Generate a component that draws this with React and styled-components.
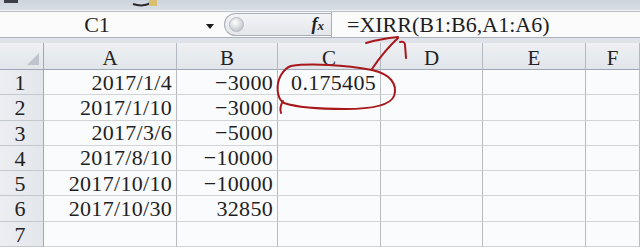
import React from 'react';
import styled, { createGlobalStyle } from 'styled-components';

const GlobalStyle = createGlobalStyle`
  body {
    margin: 0;
    background: #d6dce4;
    font-family: "Liberation Serif", serif;
  }
`;

const Page = styled.div`
  position: relative;
  width: 640px;
  height: 247px;
  overflow: hidden;
  display: flex;
  flex-direction: column;
  background: #dfe3e9;
`;

const TopStrip = styled.div`
  height: 10px;
  flex: none;
  background: linear-gradient(#cdd4dd, #d9dee5);
  border-bottom: 1px solid #f1f3f6;
  display: flex;
  align-items: flex-start;
  gap: 105px;
  padding-left: 4px;
`;

const FormulaBar = styled.div`
  height: 25px;
  flex: none;
  display: flex;
  background: #fbfbfc;
  border-top: 1px solid #b7bec8;
  border-bottom: 1px solid #aab2bd;
`;

const NameBox = styled.div`
  width: 224px;
  position: relative;
  display: flex;
  align-items: center;
  justify-content: center;
  padding-right: 30px;
  box-sizing: border-box;
  font-size: 22px;
  color: #222;
`;

const DropArrow = styled.span`
  position: absolute;
  right: 10px;
  top: 12px;
  width: 0;
  height: 0;
  border-left: 4px solid transparent;
  border-right: 4px solid transparent;
  border-top: 5px solid #1a1a1a;
`;

const Pill = styled.div`
  width: 107px;
  margin: 1px 0;
  box-sizing: border-box;
  border: 1px solid #a9afb8;
  border-right: none;
  border-radius: 12px 0 0 12px;
  background: linear-gradient(#f3f4f6, #e3e6ea);
  display: flex;
  align-items: center;
  justify-content: space-between;
  padding: 0 7px 0 4px;
`;

const Knob = styled.span`
  width: 13px;
  height: 13px;
  border-radius: 50%;
  background: radial-gradient(circle at 40% 35%, #ffffff, #c3c7cd 75%);
  border: 1px solid #b6bbc2;
`;

const Fx = styled.span`
  font-weight: bold;
  font-style: italic;
  font-size: 18px;
  color: #1e1e1e;
  span {
    font-size: 13px;
  }
`;

const FormulaInput = styled.div`
  flex: 1;
  border-left: 1px solid #a9afb8;
  display: flex;
  align-items: center;
  padding-left: 15px;
  font-size: 22px;
  color: #1d1d1d;
`;

const Gap = styled.div`
  height: 5px;
  flex: none;
  background: #dfe3e9;
`;

const Sheet = styled.div`
  display: grid;
  grid-template-columns: 44px 133px 101px 103px 102px 103px 1fr;
  grid-template-rows: 27px;
  grid-auto-rows: 25.28px;
`;

const Cell = styled.div`
  box-sizing: border-box;
  border-right: 1px solid #b8bbc0;
  border-bottom: 1px solid #d2d4d8;
  background: #fafbfc;
  display: flex;
  align-items: center;
  justify-content: flex-end;
  padding: 1px 4px 0 0;
  font-size: 22px;
  line-height: 18px;
  letter-spacing: 0.3px;
  font-variant-numeric: tabular-nums;
  color: #1f1f1f;
  white-space: nowrap;
`;

const ColHead = styled.div`
  box-sizing: border-box;
  border-right: 1px solid #b3b9c2;
  border-bottom: 1px solid #9ea7b3;
  background: linear-gradient(#eef0f3, #e1e5ea);
  display: flex;
  align-items: center;
  justify-content: center;
  padding-top: 5px;
  font-size: 21px;
  color: #222;
  position: relative;
`;

const Corner = styled(ColHead)`
  border-right-color: #9ea7b3;
  &::after {
    content: '';
    position: absolute;
    right: 4px;
    bottom: 4px;
    width: 0;
    height: 0;
    border-left: 12px solid transparent;
    border-bottom: 12px solid #bfc4cb;
  }
`;

const RowHead = styled.div`
  box-sizing: border-box;
  border-right: 1px solid #9ea7b3;
  border-bottom: 1px solid #c3c8cf;
  background: linear-gradient(90deg, #eceef2, #e3e6eb);
  display: flex;
  align-items: center;
  justify-content: center;
  padding: 2px 3px 0 0;
  font-size: 22px;
  line-height: 18px;
  color: #222;
`;

const Overlay = styled.svg`
  position: absolute;
  left: 0;
  top: 0;
  pointer-events: none;
`;

const columns = ['A', 'B', 'C', 'D', 'E', 'F'];

const rows = [
  ['2017/1/4', '\u22123000', '0.175405'],
  ['2017/1/10', '\u22123000', ''],
  ['2017/3/6', '\u22125000', ''],
  ['2017/8/10', '\u221210000', ''],
  ['2017/10/10', '\u221210000', ''],
  ['2017/10/30', '32850', ''],
  ['', '', ''],
];

const ToolbarBits = () => (
  <>
    <svg width="20" height="6">
      <rect x="0" y="0" width="14" height="3" fill="#3a3f46" />
    </svg>
    <svg width="30" height="9">
      <path d="M4 4 C 10 6, 16 6, 22 3" stroke="#2b2b2b" strokeWidth="2" fill="none" />
      <rect x="20" y="0" width="8" height="6" fill="#d8c070" />
    </svg>
  </>
);

const App = () => (
  <Page>
    <GlobalStyle />
    <TopStrip>
      <ToolbarBits />
    </TopStrip>
    <FormulaBar>
      <NameBox>
        C1
        <DropArrow />
      </NameBox>
      <Pill>
        <Knob />
        <Fx>
          f<span>x</span>
        </Fx>
      </Pill>
      <FormulaInput>=XIRR(B1:B6,A1:A6)</FormulaInput>
    </FormulaBar>
    <Gap />
    <Sheet>
      <Corner />
      {columns.map((c) => (
        <ColHead key={c}>{c}</ColHead>
      ))}
      {rows.map((r, i) => (
        <React.Fragment key={i}>
          <RowHead>{i + 1}</RowHead>
          <Cell>{r[0]}</Cell>
          <Cell>{r[1]}</Cell>
          <Cell>{r[2]}</Cell>
          <Cell />
          <Cell />
          <Cell />
        </React.Fragment>
      ))}
    </Sheet>
    <Overlay width="640" height="247" viewBox="0 0 640 247">
      <g stroke="#a8171b" strokeWidth="2" fill="none" strokeLinecap="round">
        <path d="M 291 66 C 310 63, 345 65, 372 70 C 390 74, 398 84, 394 96 C 390 106, 370 109, 345 109 C 320 109, 296 107, 284 103 C 276 98, 276 84, 281 75 C 284 70, 288 67, 291 66" />
        <path d="M 283 101 C 280 106, 280 110, 281 113" />
        <path d="M 372 69 C 378 60, 385 50, 398 38" />
        <path d="M 366 43 C 376 40, 388 38, 398 37" />
        <path d="M 400 42 Q 405 41 405 45 L 406 58" />
      </g>
    </Overlay>
  </Page>
);

export default App;
